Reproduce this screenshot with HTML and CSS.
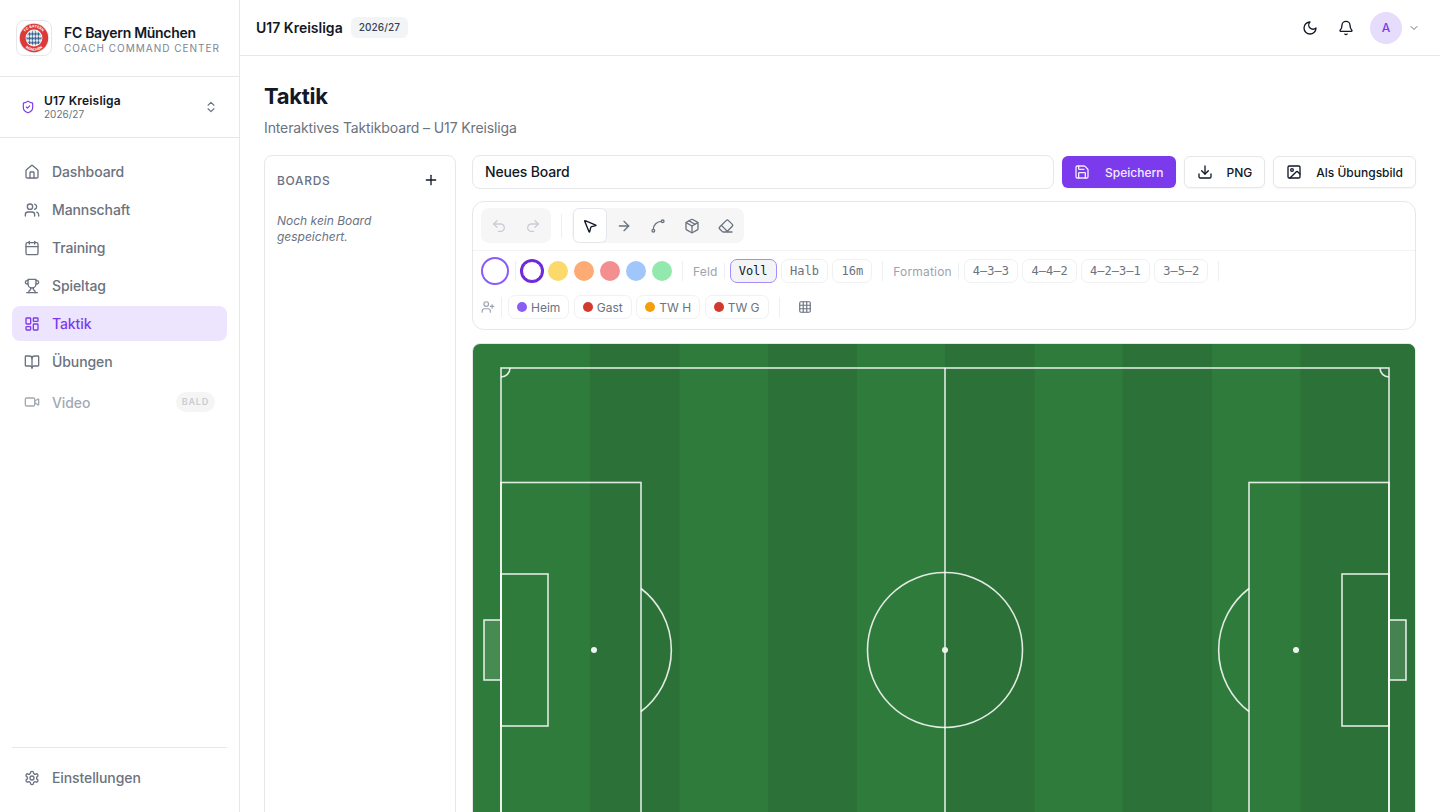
FILE: index.html
```html
<!DOCTYPE html>
<html lang="de">
<head>
    <meta charset="UTF-8">
    <title>Taktik – FC Bayern München</title>
    <link rel="stylesheet" href="styles.css">
</head>
<body>
<svg class="sprite" xmlns="http://www.w3.org/2000/svg">
    <symbol id="i-shield" viewBox="0 0 24 24"><path d="M20 13c0 5-3.5 7.5-7.66 8.95a1 1 0 0 1-.67-.01C7.5 20.5 4 18 4 13V6a1 1 0 0 1 1-1c2 0 4.5-1.2 6.24-2.72a1.17 1.17 0 0 1 1.52 0C14.51 3.81 17 5 19 5a1 1 0 0 1 1 1z"/><path d="m9 12 2 2 4-4"/></symbol>
    <symbol id="i-updown" viewBox="0 0 24 24"><path d="m7 15 5 5 5-5"/><path d="m7 9 5-5 5 5"/></symbol>
    <symbol id="i-house" viewBox="0 0 24 24"><path d="M15 21v-8a1 1 0 0 0-1-1h-4a1 1 0 0 0-1 1v8"/><path d="M3 10a2 2 0 0 1 .709-1.528l7-5.999a2 2 0 0 1 2.582 0l7 5.999A2 2 0 0 1 21 10v9a2 2 0 0 1-2 2H5a2 2 0 0 1-2-2z"/></symbol>
    <symbol id="i-users" viewBox="0 0 24 24"><path d="M16 21v-2a4 4 0 0 0-4-4H6a4 4 0 0 0-4 4v2"/><circle cx="9" cy="7" r="4"/><path d="M22 21v-2a4 4 0 0 0-3-3.87"/><path d="M16 3.13a4 4 0 0 1 0 7.75"/></symbol>
    <symbol id="i-calendar" viewBox="0 0 24 24"><path d="M8 2v4"/><path d="M16 2v4"/><rect x="3" y="4" width="18" height="18" rx="2"/><path d="M3 10h18"/></symbol>
    <symbol id="i-trophy" viewBox="0 0 24 24"><path d="M6 9H4.5a2.5 2.5 0 0 1 0-5H6"/><path d="M18 9h1.5a2.5 2.5 0 0 0 0-5H18"/><path d="M4 22h16"/><path d="M10 14.66V17c0 .55-.47.98-.97 1.21C7.85 18.75 7 20.24 7 22"/><path d="M14 14.66V17c0 .55.47.98.97 1.21C16.15 18.75 17 20.24 17 22"/><path d="M18 2H6v7a6 6 0 0 0 12 0V2Z"/></symbol>
    <symbol id="i-layout" viewBox="0 0 24 24"><rect x="3" y="3" width="7" height="9" rx="1"/><rect x="14" y="3" width="7" height="5" rx="1"/><rect x="14" y="12" width="7" height="9" rx="1"/><rect x="3" y="16" width="7" height="5" rx="1"/></symbol>
    <symbol id="i-book" viewBox="0 0 24 24"><path d="M12 7v14"/><path d="M3 18a1 1 0 0 1-1-1V4a1 1 0 0 1 1-1h5a4 4 0 0 1 4 4 4 4 0 0 1 4-4h5a1 1 0 0 1 1 1v13a1 1 0 0 1-1 1h-6a3 3 0 0 0-3 3 3 3 0 0 0-3-3z"/></symbol>
    <symbol id="i-video" viewBox="0 0 24 24"><path d="m16 13 5.223 3.482a.5.5 0 0 0 .777-.416V7.87a.5.5 0 0 0-.752-.432L16 10.5"/><rect x="2" y="6" width="14" height="12" rx="2"/></symbol>
    <symbol id="i-settings" viewBox="0 0 24 24"><path d="M12.22 2h-.44a2 2 0 0 0-2 2v.18a2 2 0 0 1-1 1.73l-.43.25a2 2 0 0 1-2 0l-.15-.08a2 2 0 0 0-2.73.73l-.22.38a2 2 0 0 0 .73 2.73l.15.1a2 2 0 0 1 1 1.72v.51a2 2 0 0 1-1 1.74l-.15.09a2 2 0 0 0-.73 2.73l.22.38a2 2 0 0 0 2.73.73l.15-.08a2 2 0 0 1 2 0l.43.25a2 2 0 0 1 1 1.73V20a2 2 0 0 0 2 2h.44a2 2 0 0 0 2-2v-.18a2 2 0 0 1 1-1.73l.43-.25a2 2 0 0 1 2 0l.15.08a2 2 0 0 0 2.73-.73l.22-.39a2 2 0 0 0-.73-2.73l-.15-.08a2 2 0 0 1-1-1.74v-.5a2 2 0 0 1 1-1.74l.15-.09a2 2 0 0 0 .73-2.73l-.22-.38a2 2 0 0 0-2.73-.73l-.15.08a2 2 0 0 1-2 0l-.43-.25a2 2 0 0 1-1-1.73V4a2 2 0 0 0-2-2z"/><circle cx="12" cy="12" r="3"/></symbol>
    <symbol id="i-moon" viewBox="0 0 24 24"><path d="M12 3a6 6 0 0 0 9 9 9 9 0 1 1-9-9Z"/></symbol>
    <symbol id="i-bell" viewBox="0 0 24 24"><path d="M10.268 21a2 2 0 0 0 3.464 0"/><path d="M3.262 15.326A1 1 0 0 0 4 17h16a1 1 0 0 0 .74-1.673C19.41 13.956 18 12.499 18 8A6 6 0 0 0 6 8c0 4.499-1.411 5.956-2.738 7.326"/></symbol>
    <symbol id="i-chevron" viewBox="0 0 24 24"><path d="m6 9 6 6 6-6"/></symbol>
    <symbol id="i-plus" viewBox="0 0 24 24"><path d="M5 12h14"/><path d="M12 5v14"/></symbol>
    <symbol id="i-save" viewBox="0 0 24 24"><path d="M15.2 3a2 2 0 0 1 1.4.6l3.8 3.8a2 2 0 0 1 .6 1.4V19a2 2 0 0 1-2 2H5a2 2 0 0 1-2-2V5a2 2 0 0 1 2-2z"/><path d="M17 21v-7a1 1 0 0 0-1-1H8a1 1 0 0 0-1 1v7"/><path d="M7 3v4a1 1 0 0 0 1 1h7"/></symbol>
    <symbol id="i-download" viewBox="0 0 24 24"><path d="M12 15V3"/><path d="M21 15v4a2 2 0 0 1-2 2H5a2 2 0 0 1-2-2v-4"/><path d="m7 10 5 5 5-5"/></symbol>
    <symbol id="i-image" viewBox="0 0 24 24"><rect x="3" y="3" width="18" height="18" rx="2"/><circle cx="9" cy="9" r="2"/><path d="m21 15-3.086-3.086a2 2 0 0 0-2.828 0L6 21"/></symbol>
    <symbol id="i-undo" viewBox="0 0 24 24"><path d="M9 14 4 9l5-5"/><path d="M4 9h10.5a5.5 5.5 0 0 1 5.5 5.5a5.5 5.5 0 0 1-5.5 5.5H11"/></symbol>
    <symbol id="i-redo" viewBox="0 0 24 24"><path d="m15 14 5-5-5-5"/><path d="M20 9H9.5A5.5 5.5 0 0 0 4 14.5A5.5 5.5 0 0 0 9.5 20H13"/></symbol>
    <symbol id="i-pointer" viewBox="0 0 24 24"><path d="M4.037 4.688a.495.495 0 0 1 .651-.651l16 6.5a.5.5 0 0 1-.063.947l-6.124 1.58a2 2 0 0 0-1.438 1.435l-1.579 6.126a.5.5 0 0 1-.947.063z"/></symbol>
    <symbol id="i-arrow" viewBox="0 0 24 24"><path d="M5 12h14"/><path d="m12 5 7 7-7 7"/></symbol>
    <symbol id="i-spline" viewBox="0 0 24 24"><circle cx="19" cy="5" r="2"/><circle cx="5" cy="19" r="2"/><path d="M5 17A12 12 0 0 1 17 5"/></symbol>
    <symbol id="i-package" viewBox="0 0 24 24"><path d="M11 21.73a2 2 0 0 0 2 0l7-4A2 2 0 0 0 21 16V8a2 2 0 0 0-1-1.73l-7-4a2 2 0 0 0-2 0l-7 4A2 2 0 0 0 3 8v8a2 2 0 0 0 1 1.73z"/><path d="M12 22V12"/><path d="M3.29 7 12 12l8.71-5"/><path d="m7.5 4.27 9 5.15"/></symbol>
    <symbol id="i-eraser" viewBox="0 0 24 24"><path d="M21 21H8a2 2 0 0 1-1.42-.587l-3.994-3.999a2 2 0 0 1 0-2.828l10-10a2 2 0 0 1 2.829 0l5.999 6a2 2 0 0 1 0 2.828L12.834 21"/><path d="m5.082 11.09 8.828 8.828"/></symbol>
    <symbol id="i-userplus" viewBox="0 0 24 24"><path d="M16 21v-2a4 4 0 0 0-4-4H6a4 4 0 0 0-4 4v2"/><circle cx="9" cy="7" r="4"/><path d="M19 8v6"/><path d="M22 11h-6"/></symbol>
    <symbol id="i-grid" viewBox="0 0 24 24"><rect x="3" y="3" width="18" height="18" rx="2"/><path d="M3 9h18"/><path d="M3 15h18"/><path d="M9 3v18"/><path d="M15 3v18"/></symbol>
</svg>

<div class="shell">
    <aside class="sidebar">
        <div class="brand">
            <div class="brand-logo">
                <svg width="30" height="30" viewBox="0 0 30 30" xmlns="http://www.w3.org/2000/svg">
                    <defs>
                        <pattern id="rauten" width="3" height="4.4" patternUnits="userSpaceOnUse">
                            <rect width="3" height="4.4" fill="#e8ebef"/>
                            <path d="M1.500 0 3 2.200 1.500 4.400 0 2.200z" fill="#33608f"/>
                        </pattern>
                        <path id="arc-top" d="M4.400 15a10.600 10.600 0 0 1 21.200 0"/>
                        <path id="arc-bottom" d="M2.200 15a12.800 12.800 0 0 0 25.600 0"/>
                    </defs>
                    <circle cx="15" cy="15" r="15" fill="#e9e9ec"/>
                    <circle cx="15" cy="15" r="14.200" fill="#dc3a36"/>
                    <circle cx="15" cy="15" r="8.400" fill="#ffffff"/>
                    <circle cx="15" cy="15" r="7.600" fill="url(#rauten)"/>
                    <text class="logo-text"><textPath href="#arc-top" startOffset="50%">FC BAYERN</textPath></text>
                    <text class="logo-text"><textPath href="#arc-bottom" startOffset="50%">MÜNCHEN</textPath></text>
                </svg>
            </div>
            <div class="brand-text">
                <div class="brand-name">FC Bayern München</div>
                <div class="brand-sub">COACH COMMAND CENTER</div>
            </div>
        </div>

        <div class="league">
            <svg class="ico ico-14 purple"><use href="#i-shield"/></svg>
            <div class="league-text">
                <div class="league-name">U17 Kreisliga</div>
                <div class="league-year">2026/27</div>
            </div>
            <svg class="ico ico-14 grey"><use href="#i-updown"/></svg>
        </div>

        <nav class="nav">
            <a class="nav-item"><svg class="ico"><use href="#i-house"/></svg>Dashboard</a>
            <a class="nav-item"><svg class="ico"><use href="#i-users"/></svg>Mannschaft</a>
            <a class="nav-item"><svg class="ico"><use href="#i-calendar"/></svg>Training</a>
            <a class="nav-item"><svg class="ico"><use href="#i-trophy"/></svg>Spieltag</a>
            <a class="nav-item active"><svg class="ico"><use href="#i-layout"/></svg>Taktik</a>
            <a class="nav-item"><svg class="ico"><use href="#i-book"/></svg>Übungen</a>
            <a class="nav-item disabled"><svg class="ico"><use href="#i-video"/></svg>Video<span class="soon">BALD</span></a>
        </nav>

        <div class="sidebar-foot">
            <a class="nav-item"><svg class="ico"><use href="#i-settings"/></svg>Einstellungen</a>
        </div>
    </aside>

    <div class="main">
        <header class="topbar">
            <span class="topbar-title">U17 Kreisliga</span>
            <span class="season">2026/27</span>
            <div class="topbar-right">
                <svg class="ico dark"><use href="#i-moon"/></svg>
                <svg class="ico dark"><use href="#i-bell"/></svg>
                <div class="user">
                    <span class="avatar">A</span>
                    <svg class="ico ico-12 grey"><use href="#i-chevron"/></svg>
                </div>
            </div>
        </header>

        <main class="content">
            <h1>Taktik</h1>
            <p class="subtitle">Interaktives Taktikboard – U17 Kreisliga</p>

            <div class="board-layout">
                <section class="boards">
                    <div class="boards-head">
                        <span>BOARDS</span>
                        <svg class="ico dark"><use href="#i-plus"/></svg>
                    </div>
                    <p class="boards-empty">Noch kein Board gespeichert.</p>
                </section>

                <section class="editor">
                    <div class="editor-head">
                        <input class="board-name" type="text" value="Neues Board">
                        <button class="btn primary"><svg class="ico"><use href="#i-save"/></svg>Speichern</button>
                        <button class="btn"><svg class="ico"><use href="#i-download"/></svg>PNG</button>
                        <button class="btn"><svg class="ico"><use href="#i-image"/></svg>Als Übungsbild</button>
                    </div>

                    <div class="toolbar">
                        <div class="tool-row first">
                            <div class="tool-group off">
                                <span class="tool"><svg class="ico"><use href="#i-undo"/></svg></span>
                                <span class="tool"><svg class="ico"><use href="#i-redo"/></svg></span>
                            </div>
                            <i class="sep tall"></i>
                            <div class="tool-group">
                                <span class="tool active"><svg class="ico"><use href="#i-pointer"/></svg></span>
                                <span class="tool"><svg class="ico"><use href="#i-arrow"/></svg></span>
                                <span class="tool"><svg class="ico"><use href="#i-spline"/></svg></span>
                                <span class="tool"><svg class="ico"><use href="#i-package"/></svg></span>
                                <span class="tool"><svg class="ico"><use href="#i-eraser"/></svg></span>
                            </div>
                        </div>

                        <div class="tool-row second">
                            <span class="fill-preview"></span>
                            <i class="sep sep-a"></i>
                            <div class="swatches">
                                <span class="swatch picked"></span>
                                <span class="swatch yellow"></span>
                                <span class="swatch orange"></span>
                                <span class="swatch red"></span>
                                <span class="swatch blue"></span>
                                <span class="swatch green"></span>
                            </div>
                            <i class="sep sep-b"></i>
                            <span class="label">Feld</span>
                            <i class="sep sep-c"></i>
                            <div class="chips">
                                <span class="chip mono on">Voll</span>
                                <span class="chip mono">Halb</span>
                                <span class="chip mono">16m</span>
                            </div>
                            <i class="sep sep-b"></i>
                            <span class="label">Formation</span>
                            <i class="sep sep-c"></i>
                            <div class="chips">
                                <span class="chip mono">4–3–3</span>
                                <span class="chip mono">4–4–2</span>
                                <span class="chip mono">4–2–3–1</span>
                                <span class="chip mono">3–5–2</span>
                            </div>
                            <i class="sep sep-b"></i>
                        </div>

                        <div class="tool-row third">
                            <svg class="ico ico-14 light"><use href="#i-userplus"/></svg>
                            <i class="sep sep-a"></i>
                            <div class="chips">
                                <span class="chip"><b class="dot home"></b>Heim</span>
                                <span class="chip"><b class="dot away"></b>Gast</span>
                                <span class="chip"><b class="dot keeper"></b>TW H</span>
                                <span class="chip"><b class="dot away"></b>TW G</span>
                            </div>
                            <i class="sep sep-b"></i>
                            <span class="grid-btn"><svg class="ico ico-14 grey"><use href="#i-grid"/></svg></span>
                        </div>
                    </div>

                    <div class="pitch">
                        <svg width="942" height="612" viewBox="0 0 942 612" xmlns="http://www.w3.org/2000/svg">
                            <rect class="stripe-light" width="942" height="612"/>
                            <g class="stripe-dark">
                                <rect x="117" width="89.500" height="612"/>
                                <rect x="295" width="89" height="612"/>
                                <rect x="472" width="89.500" height="612"/>
                                <rect x="649.500" width="89.500" height="612"/>
                                <rect x="827.500" width="114.500" height="612"/>
                            </g>
                            <g class="lines">
                                <rect class="goal" x="11" y="276" width="17" height="60"/>
                                <rect class="goal" x="916" y="276" width="17" height="60"/>
                                <rect x="28" y="24" width="888" height="564"/>
                                <path d="M472 24V588"/>
                                <circle cx="472" cy="306" r="77.500"/>
                                <rect x="28" y="138.500" width="140" height="336"/>
                                <rect x="776" y="138.500" width="140" height="336"/>
                                <rect x="28" y="230" width="47" height="152"/>
                                <rect x="869" y="230" width="47" height="152"/>
                                <path d="M168 244.500A77.500 77.500 0 0 1 168 367.500"/>
                                <path d="M776 244.500A77.500 77.500 0 0 0 776 367.500"/>
                                <path d="M37 24A9 9 0 0 1 28 33"/>
                                <path d="M907 24A9 9 0 0 0 916 33"/>
                                <path d="M28 579A9 9 0 0 1 37 588"/>
                                <path d="M916 579A9 9 0 0 0 907 588"/>
                            </g>
                            <g class="spots">
                                <circle cx="472" cy="306" r="3"/>
                                <circle cx="121" cy="306" r="3"/>
                                <circle cx="823" cy="306" r="3"/>
                            </g>
                        </svg>
                    </div>
                </section>
            </div>
        </main>
    </div>
</div>
</body>
</html>
```

FILE: styles.css
```css
*{padding: 0;margin: 0;box-sizing: border-box;}
html,body{height: 100%;overflow: hidden;}
body{
    background: #fff;
    color: #111827;
    font-family: "Inter", "Liberation Sans", sans-serif;
    font-size: 14px;
}
.sprite{display: none;}

/* icons */
.ico{
    width: 16px;
    height: 16px;
    flex: none;
    fill: none;
    stroke: currentColor;
    stroke-width: 2;
    stroke-linecap: round;
    stroke-linejoin: round;
}
.ico-14{width: 14px;height: 14px;}
.ico-12{width: 12px;height: 12px;}
.purple{color: #7c3aed;}
.grey{color: #6b7280;}
.light{color: #9ca3af;}
.dark{color: #111827;}

.shell{display: flex;height: 100vh;overflow: hidden;}

/* sidebar */
.sidebar{
    width: 240px;
    flex: none;
    display: flex;
    flex-direction: column;
    border-right: 1px solid #e5e7eb;
}
.brand{
    height: 77px;
    display: flex;
    align-items: center;
    gap: 12px;
    padding: 0 16px 1px;
    border-bottom: 1px solid #e5e7eb;
}
.brand-logo{
    width: 36px;
    height: 36px;
    flex: none;
    display: flex;
    align-items: center;
    justify-content: center;
    border: 1px solid #e5e7eb;
    border-radius: 8px;
}
.logo-text{
    font-size: 3.5px;
    font-weight: 700;
    fill: #fff;
    text-anchor: middle;
}
.brand-text{padding-top: 5px;}
.brand-name{font-size: 14px;line-height: 16px;font-weight: 600;letter-spacing: -0.3px;}
.brand-sub{font-size: 10px;line-height: 14px;letter-spacing: 1px;color: #7d8592;}

.league{
    height: 61px;
    display: flex;
    align-items: center;
    gap: 9px;
    padding: 0 21px 0 21px;
    border-bottom: 1px solid #e5e7eb;
}
.league-text{flex: 1;}
.league-name{font-size: 12px;line-height: 15px;font-weight: 600;letter-spacing: 0.2px;}
.league-year{font-size: 10px;line-height: 13px;color: #6b7280;}

.nav{
    flex: 1;
    display: flex;
    flex-direction: column;
    gap: 3px;
    padding: 16px 12px 0;
}
.nav-item{
    height: 35px;
    display: flex;
    align-items: center;
    gap: 12px;
    padding: 0 12px;
    border-radius: 8px;
    color: #6b7280;
    font-weight: 500;
    letter-spacing: -0.1px;
}
.nav-item.active{background: #ede5fd;color: #7c3aed;}
.nav-item.disabled{height: 40px;color: #a3a9b4;}
.soon{
    margin-left: auto;
    padding: 0 6px;
    height: 20px;
    line-height: 20px;
    border-radius: 10px;
    background: #f5f5f6;
    color: #c9ccd2;
    font-size: 9px;
    font-weight: 600;
    letter-spacing: 0.8px;
}
.sidebar-foot{
    margin: 0 12px;
    height: 65px;
    padding-top: 12px;
    border-top: 1px solid #e5e7eb;
}

/* top bar */
.main{flex: 1;min-width: 0;display: flex;flex-direction: column;}
.topbar{
    height: 56px;
    flex: none;
    display: flex;
    align-items: center;
    gap: 8px;
    padding: 0 20px 0 16px;
    border-bottom: 1px solid #e5e7eb;
}
.topbar-title{font-weight: 600;}
.season{
    height: 21px;
    line-height: 21px;
    padding: 0 8px;
    border-radius: 6px;
    background: #f3f4f6;
    font-size: 10px;
    font-weight: 500;
    letter-spacing: 0.1px;
    color: #374151;
}
.topbar-right{margin-left: auto;display: flex;align-items: center;gap: 20px;}
.user{display: flex;align-items: center;gap: 6px;margin-left: -4px;}
.avatar{
    width: 32px;
    height: 32px;
    border-radius: 50%;
    background: #e6dcfb;
    color: #7c3aed;
    display: flex;
    align-items: center;
    justify-content: center;
    font-size: 12px;
    font-weight: 500;
}

/* page */
.content{flex: 1;min-height: 0;overflow: hidden;padding: 24px 24px 0;}
h1{font-size: 22px;line-height: 32px;font-weight: 700;letter-spacing: -0.3px;}
.subtitle{margin-top: 6px;line-height: 20px;color: #6b7280;letter-spacing: -0.125px;}

.board-layout{display: flex;gap: 16px;margin-top: 17px;}
.boards{
    width: 192px;
    flex: none;
    padding: 15px 12px;
    border: 1px solid #e5e7eb;
    border-radius: 8px;
}
.boards-head{
    display: flex;
    align-items: center;
    justify-content: space-between;
    height: 18px;
    padding-right: 4px;
    font-size: 12px;
    font-weight: 500;
    letter-spacing: 0.7px;
    color: #6b7280;
}
.boards-empty{
    margin-top: 24px;
    font-size: 12px;
    line-height: 16px;
    font-style: italic;
    color: #6b7280;
}

.editor{flex: 1;min-width: 0;}
.editor-head{display: flex;align-items: center;gap: 8px;}
.board-name{
    flex: 1;
    min-width: 0;
    height: 34px;
    padding: 0 12px 2px;
    border: 1px solid #e5e7eb;
    border-radius: 8px;
    font: 500 14px "Inter", "Liberation Sans", sans-serif;
    letter-spacing: -0.15px;
    color: #111827;
    outline: none;
}
.btn{
    height: 32px;
    flex: none;
    display: flex;
    align-items: center;
    gap: 14px;
    padding: 0 12px;
    background: #fff;
    border: 1px solid #e5e7eb;
    border-radius: 6px;
    box-shadow: 0 1px 2px rgba(0,0,0,.04);
    font: 500 12px "Inter", "Liberation Sans", sans-serif;
    color: #111827;
}
.btn.primary{
    gap: 15px;
    background: #7c3aed;
    border: none;
    color: #f3ecff;
}

/* toolbar */
.toolbar{
    margin-top: 12px;
    padding: 0 8px;
    border: 1px solid #e5e7eb;
    border-radius: 12px;
}
.tool-row{display: flex;align-items: center;}
.tool-row.first{gap: 10px;padding: 6px 0 7px;margin: 0 -8px;padding-left: 8px;border-bottom: 1px solid #f3f4f6;}
.tool-row.second{padding-top: 6px;}
.tool-row.third{padding: 10px 0 10px;}
.tool-group{display: flex;padding: 1px;border-radius: 8px;background: #f6f6f7;color: #6b7280;}
.tool-group.off{color: #c9cdd3;}
.tool{width: 34px;height: 33px;display: flex;align-items: center;justify-content: center;border-radius: 6px;}
.tool.active{height: 35px;margin: -1px 0;background: #fff;color: #111827;box-shadow: inset 0 0 0 1px #e5e7eb;}

.sep{display: block;width: 1px;height: 20px;flex: none;background: #eeeff1;}
.sep.tall{height: 24px;}
.sep-a{margin: 0 4px 0 6px;}
.third .sep-a{margin-right: 6px;}
.sep-b{margin: 0 10px;}
.sep-c{margin: 0 5px 0 6px;height: 16px;}

.fill-preview{
    width: 28px;
    height: 28px;
    flex: none;
    border-radius: 50%;
    background: #fff;
    border: 2px solid #8b5cf6;
}
.swatches{display: flex;gap: 6px;padding: 0 0 0 2px;}
.swatch{width: 20px;height: 20px;border-radius: 50%;}
.swatch.picked{background: #fff;border: 1px solid #6d28d9;box-shadow: 0 0 0 2px #6d28d9;}
.yellow{background: #fcd96b;}
.orange{background: #fdab75;}
.red{background: #f48f8f;}
.blue{background: #a0c6fb;}
.green{background: #92e8ad;}

.label{font-size: 12px;color: #9ca3af;letter-spacing: 0.2px;}
.chips{display: flex;gap: 4.5px;}
.chip{
    height: 24px;
    display: flex;
    align-items: center;
    gap: 4px;
    padding: 0 8px;
    border: 1px solid #f0f1f3;
    border-radius: 7px;
    font-size: 12px;
    color: #6b7280;
}
.chip.mono{font-family: "DejaVu Sans Mono", "Liberation Mono", monospace;}
.chip.on{background: #f3f4f6;border-color: #a78bfa;color: #111827;}
.dot{width: 10px;height: 10px;border-radius: 50%;}
.home{background: #8b5cf6;}
.away{background: #d33a2e;}
.keeper{background: #f59e0b;}
.grid-btn{width: 30px;display: flex;justify-content: center;}

/* pitch */
.pitch{
    margin-top: 13px;
    height: 614px;
    border: 1px solid #e5e7eb;
    border-radius: 8px;
    overflow: hidden;
}
.pitch svg{display: block;}
.stripe-light{fill: #2e7b3c;}
.stripe-dark{fill: #2c7238;}
.lines{fill: none;stroke: rgba(255,255,255,.85);stroke-width: 1.6;}
.lines .goal{fill: rgba(255,255,255,.12);}
.spots{fill: #eef2ee;}
```
